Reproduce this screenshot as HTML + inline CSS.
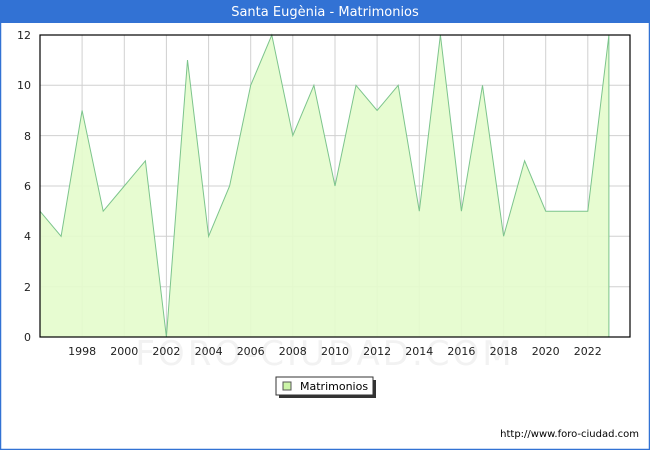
<!DOCTYPE html>
<html><head><meta charset="utf-8"><style>
html,body{margin:0;padding:0;background:#fff;}
body{width:650px;height:450px;overflow:hidden;font-family:"DejaVu Sans","Liberation Sans",sans-serif;}
</style></head><body>
<svg width="650" height="450" xmlns="http://www.w3.org/2000/svg" font-family="DejaVu Sans, Liberation Sans, sans-serif">
<rect x="0" y="0" width="650" height="450" fill="#fff"/>
<rect x="0.5" y="0.5" width="649" height="449" fill="none" stroke="#3272d4" stroke-width="1.5"/>
<rect x="0" y="0" width="650" height="23" fill="#3272d4"/>
<text x="325" y="16" fill="#fff" font-size="13" text-anchor="middle">Santa Eugènia - Matrimonios</text>
<g stroke="#d0d0d0" stroke-width="1">
<line x1="82.1" y1="35" x2="82.1" y2="337"/><line x1="124.3" y1="35" x2="124.3" y2="337"/><line x1="166.4" y1="35" x2="166.4" y2="337"/><line x1="208.6" y1="35" x2="208.6" y2="337"/><line x1="250.7" y1="35" x2="250.7" y2="337"/><line x1="292.8" y1="35" x2="292.8" y2="337"/><line x1="335" y1="35" x2="335" y2="337"/><line x1="377.1" y1="35" x2="377.1" y2="337"/><line x1="419.3" y1="35" x2="419.3" y2="337"/><line x1="461.4" y1="35" x2="461.4" y2="337"/><line x1="503.6" y1="35" x2="503.6" y2="337"/><line x1="545.7" y1="35" x2="545.7" y2="337"/><line x1="587.8" y1="35" x2="587.8" y2="337"/>
<line x1="40" y1="286.7" x2="630" y2="286.7"/><line x1="40" y1="236.3" x2="630" y2="236.3"/><line x1="40" y1="186" x2="630" y2="186"/><line x1="40" y1="135.6" x2="630" y2="135.6"/><line x1="40" y1="85.3" x2="630" y2="85.3"/>
</g>
<text x="325" y="365" font-size="34" fill="#f2f2f2" text-anchor="middle" letter-spacing="3">FORO-CIUDAD.COM</text>
<polygon fill="#e4fccc" fill-opacity="0.9" stroke="#7cc48c" stroke-width="1" points="40,337 40,211.2 61.1,236.3 82.1,110.5 103.2,211.2 124.3,186 145.4,160.8 166.4,337 187.5,60.1 208.6,236.3 229.6,186 250.7,85.3 271.8,35 292.8,135.6 313.9,85.3 335,186 356,85.3 377.1,110.5 398.2,85.3 419.3,211.2 440.4,35 461.4,211.2 482.5,85.3 503.6,236.3 524.6,160.8 545.7,211.2 566.8,211.2 587.8,211.2 608.9,35 608.9,337"/>
<rect x="40" y="35" width="590" height="302" fill="none" stroke="#000" stroke-width="1.2"/>
<g font-size="11" fill="#222" text-anchor="end">
<text x="31" y="341">0</text><text x="31" y="291">2</text><text x="31" y="240">4</text><text x="31" y="190">6</text><text x="31" y="140">8</text><text x="31" y="89">10</text><text x="31" y="39">12</text>
</g>
<g font-size="11" fill="#222" text-anchor="middle">
<text x="82.1" y="355">1998</text><text x="124.3" y="355">2000</text><text x="166.4" y="355">2002</text><text x="208.6" y="355">2004</text><text x="250.7" y="355">2006</text><text x="292.8" y="355">2008</text><text x="335" y="355">2010</text><text x="377.1" y="355">2012</text><text x="419.3" y="355">2014</text><text x="461.4" y="355">2016</text><text x="503.6" y="355">2018</text><text x="545.7" y="355">2020</text><text x="587.8" y="355">2022</text>
</g>
<rect x="279" y="380" width="97" height="18" fill="#333"/>
<rect x="276" y="377" width="97" height="18" fill="#fff" stroke="#333" stroke-width="1"/>
<rect x="283" y="382" width="8" height="8" fill="#ccf5a8" stroke="#555" stroke-width="1"/>
<text x="300" y="390" font-size="11" fill="#000">Matrimonios</text>
<text x="639" y="437" font-size="10" fill="#000" text-anchor="end">http://www.foro-ciudad.com</text>
</svg>
</body></html>
